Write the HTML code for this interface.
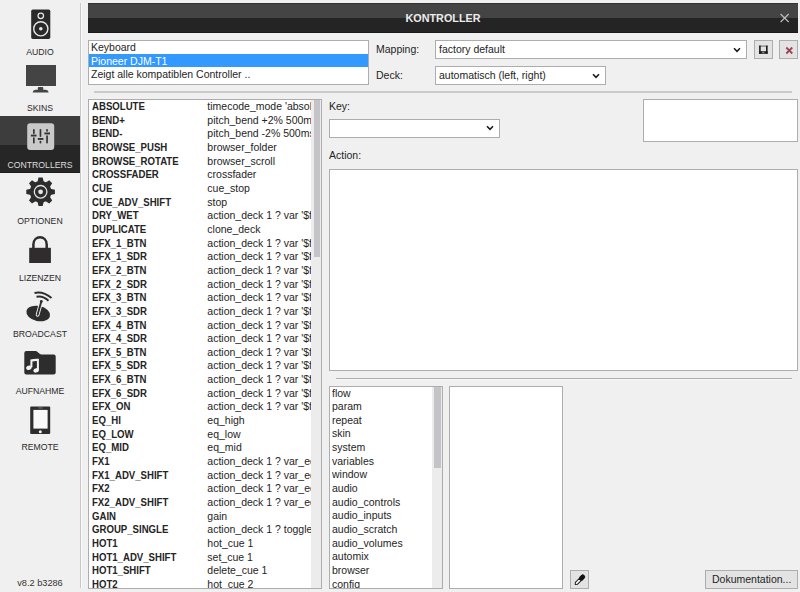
<!DOCTYPE html>
<html><head><meta charset="utf-8">
<style>
*{margin:0;padding:0;box-sizing:border-box}
html,body{width:800px;height:592px;overflow:hidden;background:#f0f0f0;font-family:"Liberation Sans",sans-serif;color:#242424}
.a{position:absolute}
.lbl{position:absolute;left:0;width:80px;text-align:center;font-size:8.7px;line-height:11px;color:#2a2a2a;white-space:nowrap}
.box{position:absolute;background:#fff;border:1px solid #adadad}
.t{position:absolute;white-space:nowrap;font-size:10.5px;line-height:13.66px}
.sep{position:absolute;height:2px;background:#cbcbcb}
.rows div{height:13.66px;line-height:13.66px;white-space:nowrap;overflow:hidden;font-size:10.5px}
.k{position:absolute;left:3px;top:0;font-weight:bold;transform:scaleX(0.915);transform-origin:0 0}
.v{position:absolute;left:118.3px;top:0}
.btn{position:absolute;background:#e3e3e3;border:1px solid #adadad}
</style></head><body>

<!-- sidebar -->
<div class="a" style="left:80px;top:3px;width:1px;height:585px;background:#c8c8c8"></div>
<div class="a" style="left:81px;top:3px;width:1px;height:585px;background:#fafafa"></div>

<!-- AUDIO -->
<svg class="a" style="left:0;top:0" width="80" height="60">
  <rect x="31.2" y="9.6" width="19.1" height="29.3" rx="1.6" fill="#2a2a2a"/>
  <circle cx="40.8" cy="15.8" r="2.75" fill="none" stroke="#e8e8e8" stroke-width="1.25"/>
  <circle cx="40.8" cy="28.8" r="7.1" fill="none" stroke="#e8e8e8" stroke-width="1.4"/>
  <circle cx="40.8" cy="28.8" r="1.8" fill="#e8e8e8"/>
</svg>
<div class="lbl" style="top:47px">AUDIO</div>

<!-- SKINS -->
<svg class="a" style="left:0;top:55px" width="80" height="45">
  <rect x="26" y="10" width="30" height="21" fill="#444"/>
  <rect x="37.8" y="32" width="5.5" height="3.2" rx="1" fill="#444"/>
  <path d="M32.6 37.5 Q33 35 35.5 34.8 H45.8 Q48.3 35 48.7 37.5 Z" fill="#444"/>
</svg>
<div class="lbl" style="top:103px">SKINS</div>

<!-- CONTROLLERS (selected) -->
<div class="a" style="left:0;top:116px;width:80px;height:29px;background:#3d3d3d"></div>
<div class="a" style="left:0;top:145px;width:80px;height:28px;background:#262626;border-bottom:1px solid #1c1c1c"></div>
<svg class="a" style="left:0;top:116px" width="80" height="40">
  <rect x="27.2" y="7.2" width="27" height="26.7" rx="3" fill="#c9c9c9"/>
  <g fill="#333">
    <rect x="33" y="12.9" width="1.7" height="5.2" rx="0.8"/><rect x="33" y="21.3" width="1.7" height="6.3" rx="0.8"/>
    <rect x="30.9" y="18.6" width="5.6" height="1.9"/>
    <rect x="39.6" y="12.9" width="1.7" height="8.2" rx="0.8"/><rect x="39.6" y="24.8" width="1.7" height="2.7" rx="0.8"/>
    <rect x="37.8" y="22" width="5.6" height="1.9"/>
    <rect x="46.2" y="12.9" width="1.7" height="2.8" rx="0.8"/><rect x="46.2" y="19.2" width="1.7" height="8.3" rx="0.8"/>
    <rect x="44.4" y="16.5" width="5.6" height="1.9"/>
  </g>
</svg>
<div class="lbl" style="top:159.5px;color:#dcdcdc">CONTROLLERS</div>

<!-- OPTIONEN -->
<svg class="a" style="left:0;top:170px" width="80" height="45">
  <g transform="translate(40.6,21.8)" fill="#2d2d2d">
    <circle r="10.8"/>
    <g><path d="M-2.1 -14.3 H2.1 L3.4 -8.5 H-3.4 Z" transform="rotate(0)"/><path d="M-2.1 -14.3 H2.1 L3.4 -8.5 H-3.4 Z" transform="rotate(45)"/><path d="M-2.1 -14.3 H2.1 L3.4 -8.5 H-3.4 Z" transform="rotate(90)"/><path d="M-2.1 -14.3 H2.1 L3.4 -8.5 H-3.4 Z" transform="rotate(135)"/><path d="M-2.1 -14.3 H2.1 L3.4 -8.5 H-3.4 Z" transform="rotate(180)"/><path d="M-2.1 -14.3 H2.1 L3.4 -8.5 H-3.4 Z" transform="rotate(225)"/><path d="M-2.1 -14.3 H2.1 L3.4 -8.5 H-3.4 Z" transform="rotate(270)"/><path d="M-2.1 -14.3 H2.1 L3.4 -8.5 H-3.4 Z" transform="rotate(315)"/></g>
    <circle r="6.3" fill="none" stroke="#e6e6e6" stroke-width="1.3"/>
    <circle r="2.4" fill="#e6e6e6"/>
  </g>
</svg>
<div class="lbl" style="top:216px">OPTIONEN</div>

<!-- LIZENZEN -->
<svg class="a" style="left:0;top:228px" width="80" height="40">
  <path d="M33.4 20.5 V16.5 C33.4 6.8 46.7 6.8 46.7 16.5 V20.5" fill="none" stroke="#302c2e" stroke-width="2.5"/>
  <rect x="29.2" y="19.8" width="21.7" height="15.2" fill="#302c2e"/>
</svg>
<div class="lbl" style="top:273px">LIZENZEN</div>

<!-- BROADCAST -->
<svg class="a" style="left:0;top:282px" width="80" height="45">
  <ellipse cx="38.2" cy="31.5" rx="12" ry="7.6" transform="rotate(12 38.2 31.5)" fill="#2d2d2d"/>
  <path d="M34.5 11 Q43 9 51.5 16" fill="none" stroke="#2d2d2d" stroke-width="2"/>
  <path d="M36.5 14.8 Q43 13.5 48.5 18.8" fill="none" stroke="#2d2d2d" stroke-width="2"/>
  <line x1="41.3" y1="19.5" x2="37.6" y2="32.8" stroke="#efefef" stroke-width="3.8" stroke-linecap="round"/>
  <line x1="41.3" y1="19.5" x2="37.6" y2="32.8" stroke="#2d2d2d" stroke-width="1.9" stroke-linecap="round"/>
  <circle cx="41.3" cy="19.5" r="1.4" fill="#2d2d2d"/>
</svg>
<div class="lbl" style="top:329px">BROADCAST</div>

<!-- AUFNAHME -->
<svg class="a" style="left:0;top:338px" width="80" height="45">
  <path d="M24.3 15 Q24.3 13 26.3 13 H35.5 Q36.7 13 37.6 14 L39.6 15.8 Q40.4 16.6 41.6 16.6 H53.7 Q55.7 16.6 55.7 18.6 V34.4 Q55.7 36.4 53.7 36.4 H26.3 Q24.3 36.4 24.3 34.4 Z" fill="#2d2d2d"/>
  <g fill="#f2f2f2">
    <path d="M30.4 21.4 Q34.6 20.4 38.9 20.7 V32.3 H36.9 V23.1 Q34.6 23 32.4 23.5 V29.3 H30.4 Z"/>
    <ellipse cx="28.9" cy="29.7" rx="2.8" ry="2.1" transform="rotate(-20 28.9 29.7)"/>
    <ellipse cx="36.1" cy="32.4" rx="2.8" ry="2.1" transform="rotate(-20 36.1 32.4)"/>
  </g>
</svg>
<div class="lbl" style="top:385.5px">AUFNAHME</div>

<!-- REMOTE -->
<svg class="a" style="left:0;top:395px" width="80" height="45">
  <rect x="30.2" y="11.4" width="20" height="27.6" rx="1" fill="#2d2d2d"/>
  <rect x="33.4" y="14.9" width="14.2" height="18.7" fill="#f8f8f8"/>
  <rect x="38.5" y="12.6" width="4" height="0.7" fill="#9a9a9a"/>
  <circle cx="40.3" cy="36.7" r="1.5" fill="#f4f4f4"/>
</svg>
<div class="lbl" style="top:442px">REMOTE</div>

<div class="lbl" style="top:578px;font-size:9.2px;color:#333">v8.2 b3286</div>

<!-- MAIN -->
<!-- title bar -->
<div class="a" style="left:88px;top:3px;width:710px;height:15px;background:#444;border-top:1px solid #343434"></div>
<div class="a" style="left:88px;top:18px;width:710px;height:15px;background:#242424;border-bottom:1px solid #1a1a1a"></div>
<div class="a" style="left:88px;top:3px;width:710px;height:30px;text-align:center;color:#ececec;font-weight:bold;font-size:10.8px;line-height:30px">KONTROLLER</div>
<svg class="a" style="left:778px;top:11px" width="14" height="14">
  <path d="M2.6 3 L10.7 11 M10.7 3 L2.6 11" stroke="#bdbdbd" stroke-width="1.15"/>
</svg>

<!-- device list -->
<div class="box" style="left:88px;top:40px;width:281px;height:45px;overflow:hidden">
  <div class="t" style="left:2px;top:0">Keyboard</div>
  <div class="a" style="left:0;top:13px;width:279px;height:13px;background:#3399ff"></div>
  <div class="t" style="left:2px;top:13.66px;color:#fff">Pioneer DJM-T1</div>
  <div class="t" style="left:2px;top:27.32px">Zeigt alle kompatiblen Controller ..</div>
</div>

<div class="t" style="left:376px;top:43px">Mapping:</div>
<div class="t" style="left:376px;top:68.7px">Deck:</div>

<div class="box" style="left:435px;top:40px;width:312px;height:19px">
  <div class="t" style="left:3px;top:2px">factory default</div>
  <svg class="a" style="left:297px;top:6px" width="8" height="6"><path d="M1 1.3 L4 4.3 L7 1.3" fill="none" stroke="#1a1a1a" stroke-width="1.6"/></svg>
</div>
<div class="btn" style="left:754px;top:40px;width:19px;height:19px">
  <svg class="a" style="left:0;top:0" width="19" height="19">
    <rect x="4.1" y="4.6" width="8.5" height="1" fill="#6a6a6a"/>
    <rect x="4.1" y="4.6" width="1.6" height="8.2" fill="#1a1a1a"/>
    <rect x="11" y="4.6" width="1.6" height="8.2" fill="#1a1a1a"/>
    <rect x="4.1" y="10.2" width="8.5" height="2.6" fill="#1a1a1a"/>
    <rect x="7.2" y="10.8" width="2.2" height="1.3" fill="#8a8a8a"/>
  </svg>
</div>
<div class="btn" style="left:779px;top:40px;width:19px;height:19px">
  <svg class="a" style="left:5px;top:5px" width="9" height="9">
    <path d="M1.3 1.5 L7.3 7.5 M7.3 1.5 L1.3 7.5" stroke="#9a4652" stroke-width="1.8"/>
  </svg>
</div>

<div class="box" style="left:435px;top:66px;width:171px;height:19px">
  <div class="t" style="left:3px;top:2px">automatisch (left, right)</div>
  <svg class="a" style="left:156px;top:6px" width="8" height="6"><path d="M1 1.3 L4 4.3 L7 1.3" fill="none" stroke="#1a1a1a" stroke-width="1.6"/></svg>
</div>

<div class="sep" style="left:94px;top:91px;width:698px"></div>

<!-- mapping list -->
<div class="box" style="left:88px;top:99px;width:234px;height:490px;overflow:hidden">
  <div class="a" style="left:222px;top:0;width:10px;height:488px;background:#ececec"></div>
  <div class="a" style="left:225px;top:0;width:6px;height:157px;background:#c4c4c8"></div>
  <div class="a rows" style="left:0;top:0;width:222px;overflow:hidden;height:488px">
<div style="position:relative"><span class="k">ABSOLUTE</span><span class="v">timecode_mode 'absolute'</span></div>
<div style="position:relative"><span class="k">BEND+</span><span class="v">pitch_bend +2% 500ms</span></div>
<div style="position:relative"><span class="k">BEND-</span><span class="v">pitch_bend -2% 500ms</span></div>
<div style="position:relative"><span class="k">BROWSE_PUSH</span><span class="v">browser_folder</span></div>
<div style="position:relative"><span class="k">BROWSE_ROTATE</span><span class="v">browser_scroll</span></div>
<div style="position:relative"><span class="k">CROSSFADER</span><span class="v">crossfader</span></div>
<div style="position:relative"><span class="k">CUE</span><span class="v">cue_stop</span></div>
<div style="position:relative"><span class="k">CUE_ADV_SHIFT</span><span class="v">stop</span></div>
<div style="position:relative"><span class="k">DRY_WET</span><span class="v">action_deck 1 ? var '$fx</span></div>
<div style="position:relative"><span class="k">DUPLICATE</span><span class="v">clone_deck</span></div>
<div style="position:relative"><span class="k">EFX_1_BTN</span><span class="v">action_deck 1 ? var '$fx</span></div>
<div style="position:relative"><span class="k">EFX_1_SDR</span><span class="v">action_deck 1 ? var '$fx</span></div>
<div style="position:relative"><span class="k">EFX_2_BTN</span><span class="v">action_deck 1 ? var '$fx</span></div>
<div style="position:relative"><span class="k">EFX_2_SDR</span><span class="v">action_deck 1 ? var '$fx</span></div>
<div style="position:relative"><span class="k">EFX_3_BTN</span><span class="v">action_deck 1 ? var '$fx</span></div>
<div style="position:relative"><span class="k">EFX_3_SDR</span><span class="v">action_deck 1 ? var '$fx</span></div>
<div style="position:relative"><span class="k">EFX_4_BTN</span><span class="v">action_deck 1 ? var '$fx</span></div>
<div style="position:relative"><span class="k">EFX_4_SDR</span><span class="v">action_deck 1 ? var '$fx</span></div>
<div style="position:relative"><span class="k">EFX_5_BTN</span><span class="v">action_deck 1 ? var '$fx</span></div>
<div style="position:relative"><span class="k">EFX_5_SDR</span><span class="v">action_deck 1 ? var '$fx</span></div>
<div style="position:relative"><span class="k">EFX_6_BTN</span><span class="v">action_deck 1 ? var '$fx</span></div>
<div style="position:relative"><span class="k">EFX_6_SDR</span><span class="v">action_deck 1 ? var '$fx</span></div>
<div style="position:relative"><span class="k">EFX_ON</span><span class="v">action_deck 1 ? var '$fx</span></div>
<div style="position:relative"><span class="k">EQ_HI</span><span class="v">eq_high</span></div>
<div style="position:relative"><span class="k">EQ_LOW</span><span class="v">eq_low</span></div>
<div style="position:relative"><span class="k">EQ_MID</span><span class="v">eq_mid</span></div>
<div style="position:relative"><span class="k">FX1</span><span class="v">action_deck 1 ? var_equal</span></div>
<div style="position:relative"><span class="k">FX1_ADV_SHIFT</span><span class="v">action_deck 1 ? var_equal</span></div>
<div style="position:relative"><span class="k">FX2</span><span class="v">action_deck 1 ? var_equal</span></div>
<div style="position:relative"><span class="k">FX2_ADV_SHIFT</span><span class="v">action_deck 1 ? var_equal</span></div>
<div style="position:relative"><span class="k">GAIN</span><span class="v">gain</span></div>
<div style="position:relative"><span class="k">GROUP_SINGLE</span><span class="v">action_deck 1 ? toggle</span></div>
<div style="position:relative"><span class="k">HOT1</span><span class="v">hot_cue 1</span></div>
<div style="position:relative"><span class="k">HOT1_ADV_SHIFT</span><span class="v">set_cue 1</span></div>
<div style="position:relative"><span class="k">HOT1_SHIFT</span><span class="v">delete_cue 1</span></div>
<div style="position:relative"><span class="k">HOT2</span><span class="v">hot_cue 2</span></div>
<div style="position:relative"><span class="k">HOT2_SHIFT</span><span class="v">delete_cue 2</span></div>
  </div>
</div>

<!-- key/action -->
<div class="t" style="left:329px;top:100px">Key:</div>
<div class="box" style="left:329px;top:119px;width:171px;height:19px">
  <svg class="a" style="left:156px;top:5px" width="8" height="6"><path d="M1 1.3 L4 4.3 L7 1.3" fill="none" stroke="#1a1a1a" stroke-width="1.6"/></svg>
</div>
<div class="box" style="left:643px;top:99px;width:155px;height:43px"></div>
<div class="t" style="left:329px;top:149px">Action:</div>
<div class="box" style="left:329px;top:169px;width:469px;height:202px"></div>

<div class="a" style="left:336px;top:378px;width:456px;height:1px;background:#acacac"></div><div class="a" style="left:336px;top:379px;width:456px;height:1px;background:#f7f7f7"></div>

<!-- category list -->
<div class="box" style="left:329px;top:386px;width:114px;height:203px;overflow:hidden">
  <div class="a" style="left:102px;top:0;width:10px;height:201px;background:#ececec"></div>
  <div class="a" style="left:104px;top:0;width:7px;height:81px;background:#c4c4c8"></div>
  <div class="a rows" style="left:2px;top:-0.5px">
    <div>flow</div><div>param</div><div>repeat</div><div>skin</div><div>system</div><div>variables</div><div>window</div><div>audio</div><div>audio_controls</div><div>audio_inputs</div><div>audio_scratch</div><div>audio_volumes</div><div>automix</div><div>browser</div><div>config</div>
  </div>
</div>
<div class="box" style="left:449px;top:386px;width:114px;height:203px"></div>

<div class="btn" style="left:570px;top:570px;width:19px;height:19px">
  <svg class="a" style="left:-1px;top:-1px" width="19" height="19">
    <g transform="translate(9.8,9.9) rotate(-45) scale(0.9)">
      <path d="M-7.2 0 L-5.4 -1.6 H0.6 V1.6 H-5.4 Z" fill="#f4f4f4" stroke="#1a1a1a" stroke-width="1.1" stroke-linejoin="round"/>
      <rect x="0" y="-2.6" width="7.2" height="5.2" rx="2.2" fill="#111"/>
    </g>
  </svg>
</div>
<div class="btn" style="left:705px;top:570px;width:93px;height:19px">
  <div class="t" style="left:6px;top:2px">Dokumentation...</div>
</div>

</body></html>
